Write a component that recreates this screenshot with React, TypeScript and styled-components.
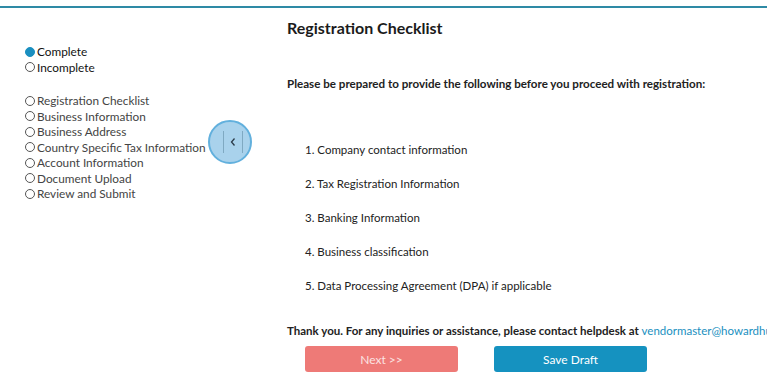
import React from 'react'
import styled, { createGlobalStyle } from 'styled-components'

const GlobalStyle = createGlobalStyle`
    html, body {
        margin: 0;
        padding: 0;
        background: #ffffff;
        font-family: Lato, "Liberation Sans", sans-serif;
        color: #222;
    }
`

const Page = styled.div`
    width: 767px;
    height: 391px;
    overflow: hidden;
    border-top: 2px solid #2e8aa5;
    margin-top: 6px;
    box-sizing: border-box;
    display: flex;
`

const Sidebar = styled.div`
    position: relative;
    width: 262px;
    flex-shrink: 0;
    padding: 36px 0 0 25px;
    box-sizing: border-box;
`

const Legend = styled.div`
    display: flex;
    flex-direction: column;
    margin-bottom: 18px;
`

const StepList = styled.div`
    display: flex;
    flex-direction: column;
`

const Item = styled.div<{ $muted?: boolean }>`
    display: flex;
    align-items: center;
    gap: 2px;
    height: 15.5px;
    font-size: 11.8px;
    color: ${p => (p.$muted ? '#444' : '#111')};
    white-space: nowrap;
`

const Dot = styled.span<{ $filled?: boolean }>`
    width: 10px;
    height: 10px;
    border-radius: 50%;
    box-sizing: border-box;
    border: 1px solid ${p => (p.$filled ? '#1a8fc0' : '#555')};
    background: ${p => (p.$filled ? '#1a8fc0' : 'transparent')};
    flex-shrink: 0;
`

const Toggle = styled.button`
    position: absolute;
    left: 208px;
    top: 112px;
    width: 44px;
    height: 44px;
    border-radius: 50%;
    border: 2px solid #62b0dd;
    background: #a9d2ec;
    padding: 0 0 0 6px;
    display: flex;
    align-items: center;
    justify-content: center;
    gap: 5px;
    cursor: pointer;
`

const Rule = styled.span`
    width: 1px;
    height: 22px;
    background: #7fa9c2;
`

const Main = styled.div`
    flex: 1;
    padding: 10px 0 0 25px;
    white-space: nowrap;
`

const Title = styled.h2`
    margin: 0;
    font-size: 16px;
    font-weight: 700;
    line-height: 20px;
    color: #1b1b1b;
`

const Intro = styled.p`
    margin: 38px 0 0;
    font-size: 11.6px;
    font-weight: 700;
    line-height: 16px;
`

const Checklist = styled.ol`
    list-style: none;
    margin: 50px 0 0;
    padding: 0 0 0 18px;
    display: flex;
    flex-direction: column;
    gap: 18px;
`

const CheckItem = styled.li`
    font-size: 11.5px;
    line-height: 16px;
    color: #222;
`

const Thanks = styled.p`
    margin: 29px 0 0;
    font-size: 11.5px;
    font-weight: 700;
    line-height: 16px;

    a {
        color: #1a8fc0;
        font-weight: 400;
        text-decoration: none;
    }
`

const Actions = styled.div`
    display: flex;
    gap: 36px;
    margin: 7px 0 0 18px;
`

const Button = styled.button<{ $variant: 'next' | 'draft' }>`
    width: 153px;
    height: 26px;
    border: 0;
    border-radius: 3px;
    font-family: Lato, "Liberation Sans", sans-serif;
    font-size: 12px;
    color: ${p => (p.$variant === 'next' ? '#fbe3e2' : '#ffffff')};
    background: ${p => (p.$variant === 'next' ? '#ee7a77' : '#1592c0')};
    cursor: pointer;
`

const steps = [
    'Registration Checklist',
    'Business Information',
    'Business Address',
    'Country Specific Tax Information',
    'Account Information',
    'Document Upload',
    'Review and Submit',
]

const checklist = [
    '1. Company contact information',
    '2. Tax Registration Information',
    '3. Banking Information',
    '4. Business classification',
    '5. Data Processing Agreement (DPA) if applicable',
]

const App = () => {
    return (
        <>
            <GlobalStyle />
            <Page>
                <Sidebar>
                    <Legend>
                        <Item><Dot $filled />Complete</Item>
                        <Item><Dot />Incomplete</Item>
                    </Legend>
                    <StepList>
                        {steps.map(s => (
                            <Item key={s} $muted><Dot />{s}</Item>
                        ))}
                    </StepList>
                    <Toggle aria-label="collapse">
                        <Rule />
                        <svg width="8" height="10" viewBox="0 0 8 10">
                            <path d="M5.5 1.5 L2.5 5 L5.5 8.5" fill="none" stroke="#2a3a48" strokeWidth="1.3" />
                        </svg>
                        <Rule />
                    </Toggle>
                </Sidebar>
                <Main>
                    <Title>Registration Checklist</Title>
                    <Intro>Please be prepared to provide the following before you proceed with registration:</Intro>
                    <Checklist>
                        {checklist.map(c => (
                            <CheckItem key={c}>{c}</CheckItem>
                        ))}
                    </Checklist>
                    <Thanks>
                        Thank you. For any inquiries or assistance, please contact helpdesk at{' '}
                        <a href="#">vendormaster@howardhughes.com</a>
                    </Thanks>
                    <Actions>
                        <Button $variant="next">Next &gt;&gt;</Button>
                        <Button $variant="draft">Save Draft</Button>
                    </Actions>
                </Main>
            </Page>
        </>
    )
}

export default App
